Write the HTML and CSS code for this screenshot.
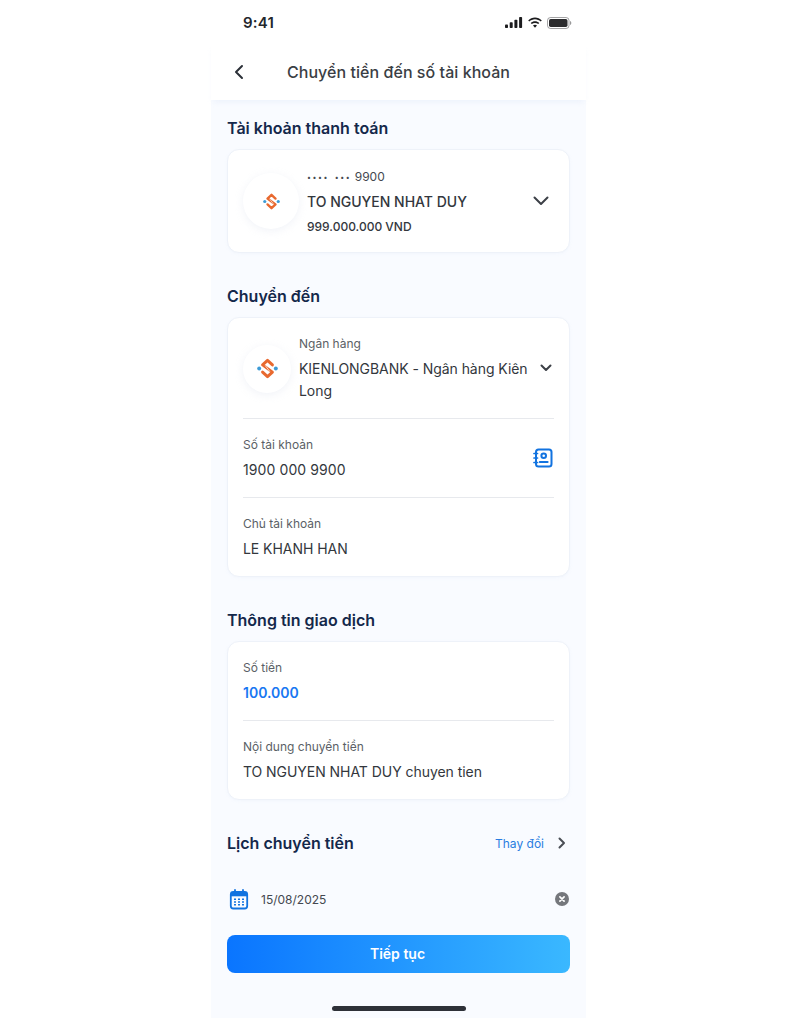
FILE: index.html
```html
<!DOCTYPE html>
<html lang="vi">
<head>
<meta charset="utf-8">
<title>Chuyển tiền</title>
<link rel="stylesheet" href="styles.css">
</head>
<body>
<svg class="defs" width="0" height="0" aria-hidden="true">
  <symbol id="logo" viewBox="0 0 32 32">
    <circle cx="3.300" cy="16" r="3" fill="#3d9bd6"/>
    <circle cx="28.700" cy="16" r="3" fill="#3d9bd6"/>
    <path d="M23.500 10.500L16 3.500 8.500 10.500 23.500 21.500 16 28.500 8.500 21.500" fill="none" stroke="#e8692f" stroke-width="4.500" stroke-linejoin="round" stroke-linecap="round"/>
    <path d="M12.500 11.500l7 9" stroke="#fff" stroke-width="1.100" fill="none"/>
  </symbol>
</svg>
<main class="phone">
  <div class="status">
    <span class="time">9:41</span>
    <div class="status-icons">
      <svg width="18" height="11" viewBox="0 0 18 11"><rect x="0" y="7.500" width="3" height="3.500" rx=".8"/><rect x="4.700" y="5.300" width="3" height="5.700" rx=".8"/><rect x="9.400" y="2.800" width="3" height="8.200" rx=".8"/><rect x="14.100" y="0" width="3" height="11" rx=".8"/></svg>
      <svg width="16" height="11" viewBox="0 0 16 11"><path d="M8 2.300c2.200 0 4.200.9 5.700 2.300l1.100-1.200C13 1.700 10.600.6 8 .6S3 1.700 1.200 3.400l1.100 1.200C3.800 3.200 5.800 2.300 8 2.300zM8 5.900c1.200 0 2.300.5 3.200 1.200l1.100-1.200C11.100 4.800 9.600 4.200 8 4.200s-3.100.6-4.300 1.700l1.100 1.200C5.700 6.400 6.800 5.900 8 5.900zM8 7.800c-.8 0-1.500.3-2 .8L8 10.800l2-2.200c-.5-.5-1.200-.8-2-.8z"/></svg>
      <svg width="25" height="12" viewBox="0 0 25 12"><rect x=".5" y=".5" width="21.500" height="11" rx="3" fill="none" stroke="#1c1c1e" stroke-opacity=".4"/><rect x="2" y="2" width="18.500" height="8" rx="1.700" fill="#2c2c2e"/><path d="M23 4v4c.8-.3 1.300-1.100 1.300-2S23.800 4.300 23 4z" fill-opacity=".45"/></svg>
    </div>
  </div>
  <header class="topbar">
    <svg class="back" width="12" height="16" viewBox="0 0 12 16"><path d="M9 2L3 8l6 6" fill="none" stroke="#2b3038" stroke-width="2" stroke-linecap="round" stroke-linejoin="round"/></svg>
    <h1>Chuyển tiền đến số tài khoản</h1>
  </header>

  <div class="content">
    <h2>Tài khoản thanh toán</h2>
    <section class="card account">
      <div class="avatar avatar-lg"><svg class="logo-sm"><use href="#logo"/></svg></div>
      <div class="account-info">
        <div class="masked"><span class="dots">•••• •••</span> 9900</div>
        <div class="holder">TO NGUYEN NHAT DUY</div>
        <div class="balance">999.000.000 VND</div>
      </div>
      <svg class="chev-lg" width="16" height="10" viewBox="0 0 16 10"><path d="M1.500 1.500L8 8l6.500-6.500" fill="none" stroke="#3c4047" stroke-width="2" stroke-linecap="round" stroke-linejoin="round"/></svg>
    </section>

    <h2 class="gap-section">Chuyển đến</h2>
    <section class="card">
      <div class="bank">
        <div class="avatar avatar-md"><svg class="logo-md"><use href="#logo"/></svg></div>
        <div class="bank-info">
          <div class="label">Ngân hàng</div>
          <div class="value bank-name">KIENLONGBANK - Ngân hàng Kiên Long</div>
        </div>
        <svg class="chev-sm" width="12" height="8" viewBox="0 0 12 8"><path d="M1.500 1.500L6 6l4.500-4.500" fill="none" stroke="#3c4047" stroke-width="2" stroke-linecap="round" stroke-linejoin="round"/></svg>
      </div>
      <div class="field field-icon">
        <div>
          <div class="label">Số tài khoản</div>
          <div class="value account-number">1900 000 9900</div>
        </div>
        <svg class="contact" width="20" height="20" viewBox="0 0 20 20" fill="none" stroke="#1273e0" stroke-width="2"><rect x="3" y="1.500" width="15.500" height="17" rx="2.500"/><circle cx="10.700" cy="7.700" r="2.300"/><path d="M6.800 14h7.800" stroke-linecap="round"/><path d="M1 5.500h3.500M1 10h3.500M1 14.500h3.500" stroke-linecap="round" stroke-width="1.700"/></svg>
      </div>
      <div class="field">
        <div class="label">Chủ tài khoản</div>
        <div class="value">LE KHANH HAN</div>
      </div>
    </section>

    <h2 class="gap-section">Thông tin giao dịch</h2>
    <section class="card">
      <div class="field">
        <div class="label">Số tiền</div>
        <div class="value amount">100.000</div>
      </div>
      <div class="field">
        <div class="label">Nội dung chuyển tiền</div>
        <div class="value">TO NGUYEN NHAT DUY chuyen tien</div>
      </div>
    </section>

    <div class="schedule-head">
      <h2>Lịch chuyển tiền</h2>
      <div class="change">
        <span>Thay đổi</span>
        <svg width="10" height="12" viewBox="0 0 10 12"><path d="M2.500 1.500L7 6l-4.500 4.500" fill="none" stroke="#4a4e55" stroke-width="2" stroke-linecap="round" stroke-linejoin="round"/></svg>
      </div>
    </div>
    <div class="date-row">
      <svg width="20" height="21" viewBox="0 0 20 21"><rect x="1.800" y="3" width="16.400" height="16.500" rx="2.500" fill="none" stroke="#1273e0" stroke-width="1.800"/><path d="M2 5.300h16" stroke="#1273e0" stroke-width="4"/><path d="M6 1v4M14 1v4" stroke="#1273e0" stroke-width="1.800" stroke-linecap="round"/><path d="M5 10.300h2M9 10.300h2M13 10.300h2M5 13h2M9 13h2M13 13h2M5 15.700h2M9 15.700h2M13 15.700h2" stroke="#1273e0" stroke-width="1.500"/></svg>
      <span class="date">15/08/2025</span>
      <svg class="clear" width="14" height="14" viewBox="0 0 14 14"><circle cx="7" cy="7" r="7" fill="#75777c"/><path d="M4.900 4.900l4.200 4.200M9.100 4.900l-4.200 4.200" stroke="#fff" stroke-width="1.700" stroke-linecap="round"/></svg>
    </div>
    <button class="cta" type="button">Tiếp tục</button>
  </div>
  <div class="home"></div>
</main>
</body>
</html>
```
FILE: styles.css
```css
* { box-sizing: border-box; }
html, body { margin: 0; padding: 0; background: #fff; }
body { font-family: Inter, "Noto Sans", sans-serif; color: #33373d; height: 1018px; overflow: hidden; }
.defs { position: absolute; }
.phone { width: 375px; height: 1018px; margin-left: 211px; background: #f9fbff; display: flex; flex-direction: column; }
.status { height: 44px; background: #fff; display: flex; align-items: center; justify-content: space-between; padding: 1px 14px 0 32px; }
.time { font-size: 15px; font-weight: 600; color: #24272c; letter-spacing: .2px; }
.status-icons { display: flex; align-items: center; gap: 4px; fill: #1c1c1e; }
.topbar { height: 56px; background: #fff; display: flex; align-items: center; justify-content: center; position: relative; box-shadow: 0 4px 6px -2px rgba(190, 205, 235, .2); padding-bottom: 1px; }
.topbar h1 { margin: 0; font-size: 16px; font-weight: 500; color: #3a3e44; line-height: 24px; letter-spacing: .05px; }
.back { position: absolute; left: 22px; top: 20px; }
.content { padding: 0 16px; flex: 1; display: flex; flex-direction: column; }
h2 { margin: 16px 0 9px; font-size: 16px; line-height: 24px; font-weight: 600; color: #14284b; }
h2.gap-section { margin-top: 31px; }
.card { background: #fff; border: 1px solid #eef2f9; border-radius: 12px; padding: 0 15px; box-shadow: 0 1px 3px rgba(200, 212, 235, .12); }
.account { height: 104px; display: flex; align-items: center; padding: 0 20px 0 15px; }
.avatar { border-radius: 50%; background: #fff; box-shadow: 0 2px 8px rgba(190, 200, 225, .22); display: flex; align-items: center; justify-content: center; flex: none; }
.avatar-lg { width: 56px; height: 56px; margin-right: 8px; }
.avatar-md { width: 48px; height: 48px; margin: 0 8px 0 0; }
.logo-sm { width: 17px; height: 17px; }
.logo-md { width: 21px; height: 21px; }
.account-info { flex: 1; }
.masked { font-size: 12px; line-height: 18px; color: #44484f; margin-bottom: 4px; padding-top: 1px; }
.dots { font-size: 7px; letter-spacing: 1.600px; word-spacing: 2px; vertical-align: 1px; }
.holder { font-size: 14px; line-height: 22px; font-weight: 500; color: #33373d; margin-bottom: 5px; }
.balance { font-size: 12px; line-height: 18px; font-weight: 500; color: #33373d; }
.chev-lg { flex: none; }
.bank { display: flex; align-items: center; padding: 16px 0 15px; border-bottom: 1px solid #e7e9ed; height: 101px; }
.bank-info { flex: 1; }
.bank-name { margin-top: 4px; width: 236px; line-height: 22px; }
.chev-sm { flex: none; margin: 0 2px 0 5px; align-self: center; transform: translateY(-1px); }
.label { font-size: 12px; line-height: 18px; color: #5b5f66; }
.value { font-size: 14px; line-height: 22px; color: #33373d; margin-top: 5px; letter-spacing: -.05px; }
.account-number { letter-spacing: .1px; }
.field { padding: 17px 0 16px; border-bottom: 1px solid #e7e9ed; height: 79px; }
.field:last-child { border-bottom: 0; height: 78px; }
.field-icon { display: flex; align-items: center; justify-content: space-between; }
.contact { margin: 0 1px 2px 0; }
.amount { color: #1877f2; font-weight: 600; letter-spacing: 0; }
.schedule-head { display: flex; align-items: center; justify-content: space-between; margin-top: 31px; height: 24px; }
.schedule-head h2 { margin: 0; }
.change { display: flex; align-items: center; gap: 13px; font-size: 12px; color: #2a7de1; padding-right: 3px; }
.date-row { display: flex; align-items: center; margin-top: 32px; height: 24px; padding: 0 1px 0 2px; }
.date { flex: 1; margin-left: 12px; font-size: 12px; color: #44484f; }
.cta { margin-top: 24px; height: 38px; border: 0; border-radius: 8px; padding: 0 2px 2px 0; background: linear-gradient(90deg, #0a75ff 0%, #3ab8ff 100%); color: #fff; font: 600 14px Inter, "Noto Sans", sans-serif; display: block; width: 100%; }
.home { position: absolute; left: 332px; top: 1006px; width: 134px; height: 5px; border-radius: 3px; background: #2e3138; }
```
